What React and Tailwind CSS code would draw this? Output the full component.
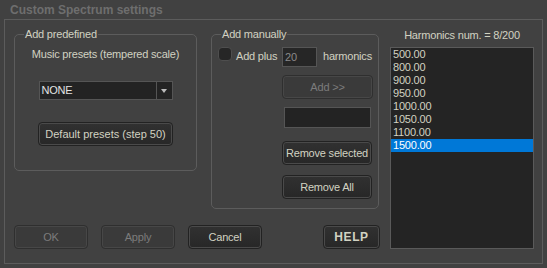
import React from "react";

const HARMONICS = ["500.00", "800.00", "900.00", "950.00", "1000.00", "1050.00", "1100.00", "1500.00"];

function Btn({ children, disabled, className = "" }) {
    return (
        <button
            className={`flex items-center justify-center rounded-[4px] border ${disabled
                ? "border-[#2f2f2f] bg-[#3a3a3a] text-[#7c7c7c] shadow-[inset_0_0_0_1px_#474747]"
                : "border-[#222] bg-gradient-to-b from-[#313131] to-[#272727] text-[#d2d2c2] shadow-[inset_0_0_0_1px_#4a4a4a]"
                } ${className}`}
        >
            {children}
        </button>
    );
}

function Group({ title, className = "", children }) {
    return (
        <fieldset className={`rounded-[5px] border border-[#5c5c5c] p-0 m-0 min-w-0 ${className}`}>
            <legend className="ml-[9px] px-[1px] leading-[14px]">{title}</legend>
            {children}
        </fieldset>
    );
}

export default function App() {
    return (
        <div className="flex h-[268px] w-[547px] flex-col bg-[#414141] font-['Liberation_Sans',Arial,sans-serif] text-[11px] tracking-[-0.2px] text-[#d2d2c2]">
            {/* Title */}
            <div className="flex h-[19px] items-center pl-[10px] text-[12px] font-bold tracking-[0px] text-[#6e6e6e]">
                Custom Spectrum settings
            </div>

            {/* Frame */}
            <div className="ml-[4px] flex h-[245px] w-[539px] border border-[#5c5c5c] pl-[9px]">
                {/* Left part */}
                <div className="flex w-[366px] flex-col pt-[7px]">
                    <div className="flex gap-[14px]">
                        <Group title="Add predefined" className="h-[144px] w-[183px]">
                            <div className="flex flex-col items-center pt-[6px]">
                                <div className="leading-[14px]">Music presets (tempered scale)</div>
                                <div className="mt-[20px] flex h-[19px] w-[134px] items-center border border-[#555] bg-[#232323]">
                                    <span className="flex-1 pl-[2px] text-[#e4e4e4]">NONE</span>
                                    <span className="flex h-full w-[16px] items-center justify-center border-l border-[#555]">
                                        <span className="h-0 w-0 border-x-[3px] border-t-[4px] border-x-transparent border-t-[#bbb]" />
                                    </span>
                                </div>
                                <Btn className="mt-[22px] h-[24px] w-[135px] tracking-[0px]">Default presets (step 50)</Btn>
                            </div>
                        </Group>

                        <Group title="Add manually" className="h-[182px] w-[168px]">
                            <div className="flex flex-col pt-[6px]">
                                <div className="flex items-start pl-[6px]">
                                    <span className="h-[14px] w-[14px] rounded-[4px] border border-[#4e4e4e] bg-[#262626]" />
                                    <span className="ml-[4px] w-[46px] leading-[19px]">Add plus</span>
                                    <span className="flex h-[20px] w-[35px] items-center border border-[#555] bg-[#262626] pl-[2px] text-[#8a8a8a]">20</span>
                                    <span className="ml-[6px] leading-[19px]">harmonics</span>
                                </div>
                                <div className="flex flex-col pl-[70px]">
                                    <Btn disabled className="mt-[8px] h-[24px] w-[91px]">Add &gt;&gt;</Btn>
                                    <div className="ml-[2px] mt-[8px] h-[21px] w-[87px] border border-[#555] bg-[#232323]" />
                                    <Btn className="mt-[13px] h-[24px] w-[90px]">Remove selected</Btn>
                                    <Btn className="mt-[10px] h-[24px] w-[90px]">Remove All</Btn>
                                </div>
                            </div>
                        </Group>
                    </div>

                    {/* Bottom buttons */}
                    <div className="mt-[16px] flex items-center">
                        <Btn disabled className="h-[24px] w-[74px]">OK</Btn>
                        <Btn disabled className="ml-[13px] h-[24px] w-[74px]">Apply</Btn>
                        <Btn className="ml-[13px] h-[24px] w-[74px]">Cancel</Btn>
                        <Btn className="ml-auto h-[24px] w-[57px] text-[12px] font-bold tracking-[0.6px] text-[#a8a8a8]">HELP</Btn>
                    </div>
                </div>

                {/* Right part */}
                <div className="ml-[10px] flex w-[144px] flex-col pt-[8px]">
                    <div className="text-center leading-[14px]">Harmonics num. = 8/200</div>
                    <div className="mt-[5px] h-[202px] border border-[#5a5a5a] bg-[#242424]">
                        {HARMONICS.map((h, i) => (
                            <div
                                key={h}
                                className={`h-[13px] pl-[2px] leading-[13px] ${i === HARMONICS.length - 1 ? "bg-[#0078d7] text-white" : ""}`}
                            >
                                {h}
                            </div>
                        ))}
                    </div>
                </div>
            </div>
        </div>
    );
}
